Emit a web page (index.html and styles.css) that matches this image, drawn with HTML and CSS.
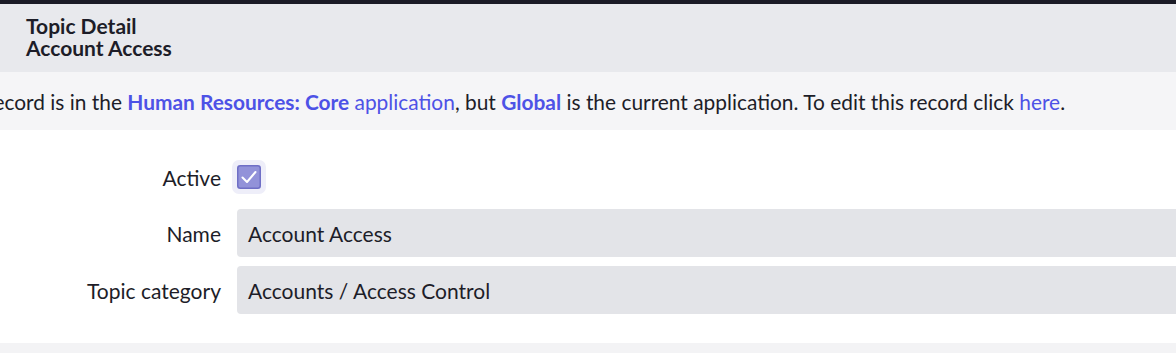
FILE: index.html
```html
<!DOCTYPE html>
<html lang="en">

<head>
    <meta charset="utf-8">
    <meta name="viewport" content="width=device-width, initial-scale=1.0">
    <title>Topic Detail - Account Access</title>
    <link rel="stylesheet" href="styles.css">
</head>

<body>
    <div class="topbar"></div>
    <header class="header">
        <h1>Topic Detail</h1>
        <h2>Account Access</h2>
    </header>
    <div class="notice">
        <p>This record is in the <a href="#" class="strong">Human Resources: Core</a> <a href="#">application</a>, but <a href="#" class="strong">Global</a> is the current application. To edit this record click <a href="#">here</a>.</p>
    </div>
    <form class="form">
        <div class="row row-check">
            <label for="active">Active</label>
            <span class="check">
                <input type="checkbox" id="active" checked>
                <svg viewBox="0 0 24 24" width="24" height="24">
                    <rect x="0.75" y="0.75" width="22.5" height="22.5" rx="2.5" fill="#9292d9" stroke="#6f6fc6" stroke-width="1.5"/>
                    <path d="M5.5 12.5l4.5 4.5 8.5-10" fill="none" stroke="#fff" stroke-width="2" stroke-linecap="round" stroke-linejoin="round"/>
                </svg>
            </span>
        </div>
        <div class="row">
            <label for="name">Name</label>
            <div class="field" id="name">Account Access</div>
        </div>
        <div class="row">
            <label for="category">Topic category</label>
            <div class="field" id="category">Accounts / Access Control</div>
        </div>
    </form>
    <div class="footer"></div>
</body>

</html>
```

FILE: styles.css
```css
* {
    box-sizing: border-box;
}

body {
    margin: 0;
    font-family: Lato, "Noto Sans", sans-serif;
    color: #1d1d28;
    overflow: hidden;
    background-color: #fff;
}

.topbar {
    height: 4px;
    background-color: #1b1b26;
}

.header {
    height: 68px;
    padding: 11px 26px 0;
    background-color: #e8e9ed;
}

.header h1,
.header h2 {
    margin: 0;
    font-size: 21px;
    line-height: 22px;
    font-weight: 700;
}

.notice {
    height: 58px;
    display: flex;
    align-items: center;
    background-color: #f5f5f7;
}

.notice p {
    margin: 0;
    white-space: nowrap;
    font-size: 20.9px;
    text-indent: -57px;
}

.notice a {
    color: #4d52e6;
    text-decoration: none;
}

.notice .strong {
    font-weight: 700;
}

.form {
    padding: 30px 0 29px;
    display: flex;
    flex-direction: column;
    gap: 9px;
}

.row {
    display: grid;
    grid-template-columns: 221px 1fr;
    column-gap: 16px;
    align-items: center;
    height: 48px;
}

.row-check {
    height: 34px;
    margin-bottom: 6px;
}

.row label {
    text-align: right;
    font-size: 21px;
}

.check {
    position: relative;
    width: 34px;
    height: 34px;
    margin-left: -5px;
    border-radius: 7px;
    background-color: #eeeef9;
    display: flex;
    align-items: center;
    justify-content: center;
}

.check input {
    position: absolute;
    opacity: 0;
    margin: 0;
}

.field {
    height: 48px;
    margin-right: -20px;
    padding: 0 11px;
    display: flex;
    align-items: center;
    font-size: 21px;
    border-radius: 4px;
    background-color: #e3e4e8;
}

.footer {
    height: 20px;
    background-color: #f3f3f5;
}
```
